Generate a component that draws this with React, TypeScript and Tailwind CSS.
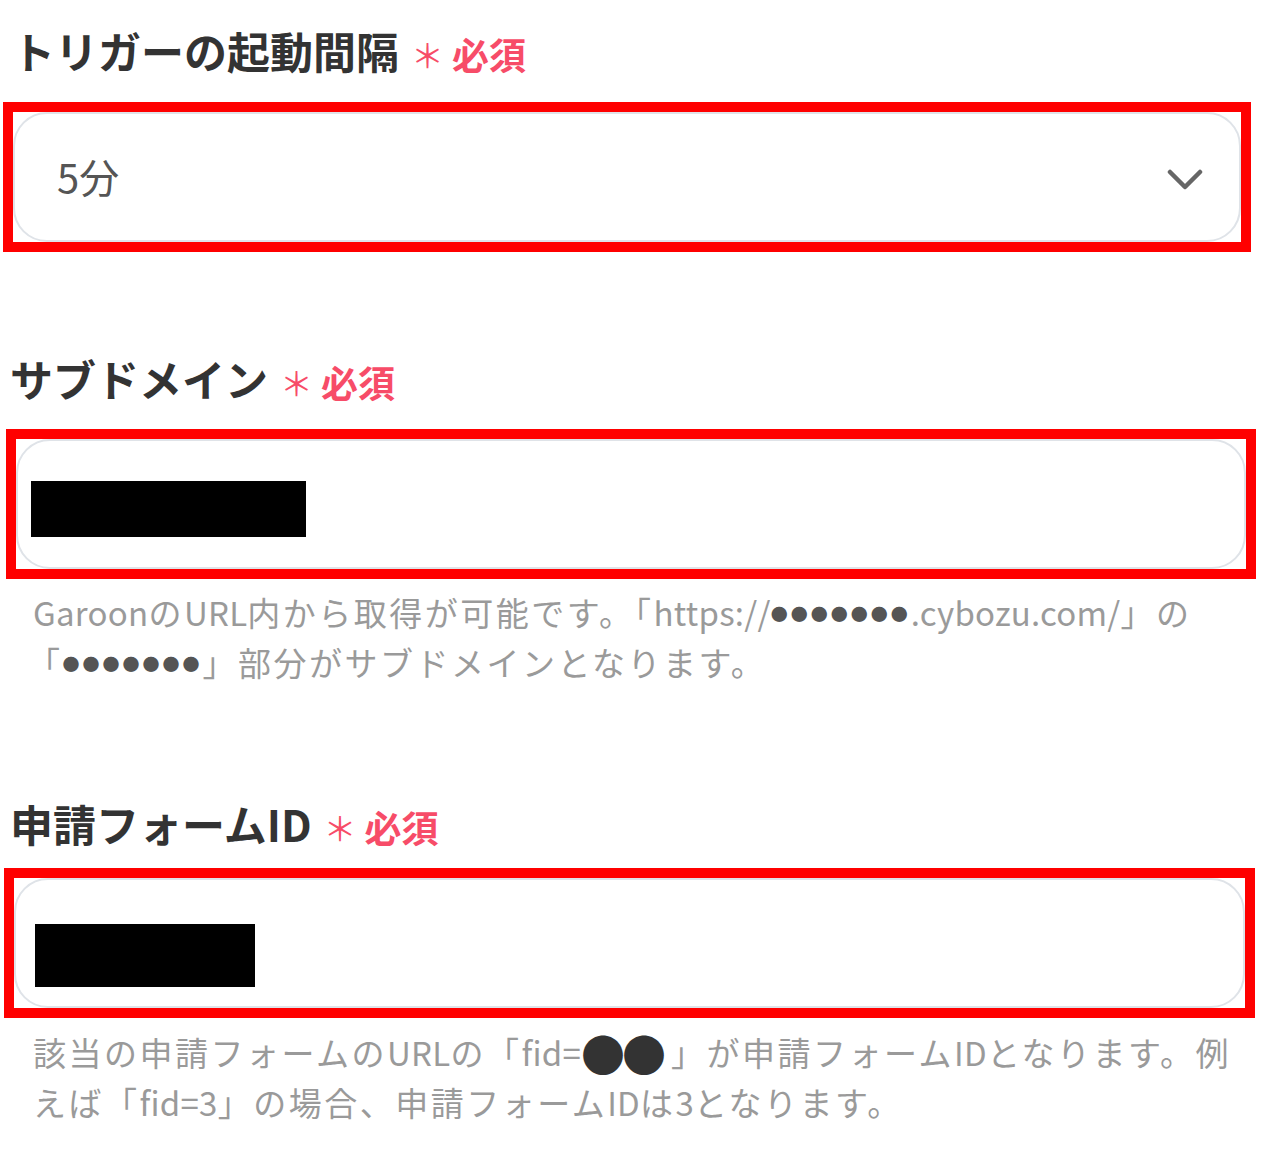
const font = { fontFamily: '"Noto Sans CJK JP", "Noto Sans", sans-serif' };

function Label({ text, className }: { text: string; className?: string }) {
  return (
    <div className={`flex h-[60px] items-center gap-[12px] ${className ?? ''}`}>
      <span className="text-[43px] leading-none font-bold text-[#333]">{text}</span>
      <span className="flex items-center gap-[8px] pt-[8px] text-[37px] leading-none font-bold text-[#f74c68]">
        <span className="text-[33px] font-normal">＊</span>
        <span>必須</span>
      </span>
    </div>
  );
}

function Marked({ className, children }: { className?: string; children: React.ReactNode }) {
  // red annotation frame around the field
  return (
    <div className={`h-[150px] border-[10px] border-[#ff0000] ${className ?? ''}`}>
      <div className="h-full w-full rounded-[34px] border-2 border-[#dfe3e8] bg-white">{children}</div>
    </div>
  );
}

function Dots() {
  return <span className="text-[17px] leading-none tracking-[3px] text-[#555]">●●●●●●●</span>;
}

// japanese runs are a bit wider than the latin ones in the original
function J({ children }: { children: React.ReactNode }) {
  return <span className="tracking-[2.5px]">{children}</span>;
}

function Line({ children, className }: { children: React.ReactNode; className?: string }) {
  return <div className={`flex h-[50px] items-center whitespace-nowrap ${className ?? ''}`}>{children}</div>;
}

export default function App() {
  return (
    <div className="min-h-screen bg-white pt-[20px]" style={font}>
      {/* trigger interval */}
      <Label text="トリガーの起動間隔" className="ml-[12px]" />
      <Marked className="mt-[22px] ml-[3px] w-[1248px]">
        <div className="flex h-full items-center justify-between pl-[42px] pr-[36px]">
          <span className="text-[40px] text-[#555] pb-[2px]">5分</span>
          <svg width="36" height="22" viewBox="0 0 36 22" className="mt-[6px]">
            <polyline points="3,3 18,18 33,3" fill="none" stroke="#666" strokeWidth="4.5" strokeLinecap="round" strokeLinejoin="round" />
          </svg>
        </div>
      </Marked>

      {/* subdomain */}
      <Label text="サブドメイン" className="ml-[10px] mt-[96px]" />
      <Marked className="mt-[21px] ml-[6px] w-[1250px]">
        <div className="flex h-full items-start pl-[13px] pt-[40px]">
          <div className="h-[56px] w-[275px] bg-black" />
        </div>
      </Marked>
      <div className="mt-[9px] ml-[33px] text-[33px] text-[#9a9a9a] tracking-[0.25px]">
        <Line>
          Garoon<J>の</J>URL<J>内から取得が可能です。「</J>https://<Dots />.cybozu.com/<J>」の</J>
        </Line>
        <Line className="-ml-[6px]">
          <J>「</J>
          <Dots />
          <J>」部分がサブドメインとなります。</J>
        </Line>
      </div>

      {/* form id */}
      <Label text="申請フォームID" className="ml-[10px] mt-[105px]" />
      <Marked className="mt-[15px] ml-[4px] w-[1251px]">
        <div className="flex h-full items-start pl-[19px] pt-[44px]">
          <div className="h-[63px] w-[220px] bg-black" />
        </div>
      </Marked>
      <div className="mt-[10px] ml-[33px] text-[33px] text-[#9a9a9a] tracking-[0.25px]">
        <Line>
          <J>該当の申請フォームの</J>URL<J>の「</J>fid=
          <span className="text-[44px] leading-none text-[#333] tracking-[-3px]">●●</span>
          <span className="ml-[8px]">
            <J>」が申請フォーム</J>ID<J>となります。例</J>
          </span>
        </Line>
        <Line>
          <J>えば「</J>fid=3<J>」の場合、申請フォーム</J>ID<J>は</J>3<J>となります。</J>
        </Line>
      </div>
    </div>
  );
}
